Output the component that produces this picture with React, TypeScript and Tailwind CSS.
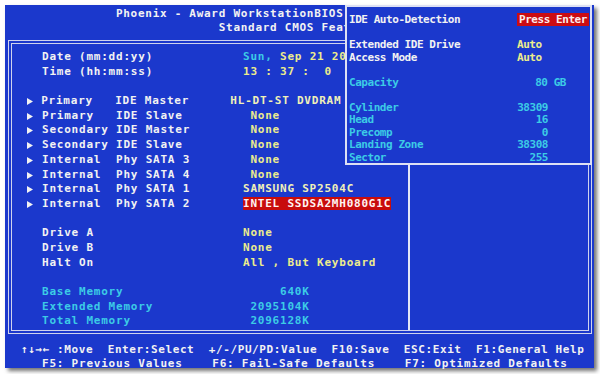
import type { ReactNode } from "react";

const Y = "text-[#ecec8c]";
const YL = "text-[#f0f0b8]";
const C = "text-[#3ccbe6]";

type Row = {
  arrow?: boolean;
  label: string;
  cyan?: boolean;
  value?: ReactNode;
} | null;

const rows: Row[] = [
  {
    label: "Date (mm:dd:yy)",
    value: (
      <>
        <span className={C}>Sun,</span>
        <span className={Y}> Sep 21 2008</span>
      </>
    ),
  },
  { label: "Time (hh:mm:ss)", value: <span className={Y}>13 : 37 :  0</span> },
  null,
  { arrow: true, label: "Primary   IDE Master", value: <span className={YL}>HL-DT-ST DVDRAM GSA-H62N</span> },
  { arrow: true, label: "Primary   IDE Slave", value: <span className={Y}> None</span> },
  { arrow: true, label: "Secondary IDE Master", value: <span className={Y}> None</span> },
  { arrow: true, label: "Secondary IDE Slave", value: <span className={Y}> None</span> },
  { arrow: true, label: "Internal  Phy SATA 3", value: <span className={Y}> None</span> },
  { arrow: true, label: "Internal  Phy SATA 4", value: <span className={Y}> None</span> },
  { arrow: true, label: "Internal  Phy SATA 1", value: <span className={YL}>SAMSUNG SP2504C</span> },
  {
    arrow: true,
    label: "Internal  Phy SATA 2",
    value: <span className="bg-[#c80c0c] text-[#fff2f2]">INTEL SSDSA2MH080G1C</span>,
  },
  null,
  { label: "Drive A", value: <span className={Y}>None</span> },
  { label: "Drive B", value: <span className={Y}>None</span> },
  { label: "Halt On", value: <span className={Y}>All , But Keyboard</span> },
  null,
  { label: "Base Memory", cyan: true, value: <span className={C}>     640K</span> },
  { label: "Extended Memory", cyan: true, value: <span className={C}> 2095104K</span> },
  { label: "Total Memory", cyan: true, value: <span className={C}> 2096128K</span> },
];

type PopRow = { label: string; cyan?: boolean; value?: ReactNode } | null;

const popRows: PopRow[] = [
  {
    label: "IDE Auto-Detection",
    value: <span className="bg-[#cc0c12] px-[2px] text-[#fbecec]">Press Enter</span>,
  },
  null,
  { label: "Extended IDE Drive", value: <span className={Y}>Auto</span> },
  { label: "Access Mode", value: <span className={Y}>Auto</span> },
  null,
  { label: "Capacity", cyan: true, value: <span className={`${C} inline-block w-[49px] text-right`}>80 GB</span> },
  null,
  { label: "Cylinder", cyan: true, value: <span className={`${C} inline-block w-[31px] text-right`}>38309</span> },
  { label: "Head", cyan: true, value: <span className={`${C} inline-block w-[31px] text-right`}>16</span> },
  { label: "Precomp", cyan: true, value: <span className={`${C} inline-block w-[31px] text-right`}>0</span> },
  { label: "Landing Zone", cyan: true, value: <span className={`${C} inline-block w-[31px] text-right`}>38308</span> },
  { label: "Sector", cyan: true, value: <span className={`${C} inline-block w-[31px] text-right`}>255</span> },
];

function Arrow() {
  return (
    <svg width="6" height="7" viewBox="0 0 6 7" className="mt-[4px]">
      <polygon points="0,0 6,3.5 0,7" fill="#f2f2f2" />
    </svg>
  );
}

export default function App() {
  return (
    <div className="h-[374px] w-[600px] overflow-hidden bg-white pl-[5px] pt-[5px] font-['DejaVu_Sans_Mono','Liberation_Mono',monospace] font-bold text-[11px] text-[#f2f2f2]">
      <div className="relative h-[363px] w-[589px] bg-[#1b38cc] shadow-[3px_3px_4px_rgba(0,0,0,0.55)]">
        {/* title */}
        <div className="whitespace-pre pt-[2px] text-center leading-[14px] tracking-[0.72px]">
          <div>Phoenix - Award WorkstationBIOS CMOS Setup Utility</div>
          <div>Standard CMOS Features</div>
        </div>

        {/* main box */}
        <div className="ml-[3px] mt-[5px] flex h-[294px] w-[584px] border-4 border-double border-[#cfd3ee]">
          <div className="w-[396px] pt-[6px] tracking-[0.78px]">
            {rows.map((r, i) =>
              r ? (
                <div key={i} className="flex h-[14.7px] whitespace-pre pl-[15px] leading-[14.7px]">
                  <div className="w-[15px]">{r.arrow && <Arrow />}</div>
                  <div className={`w-[201px] ${r.cyan ? C : ""}`}>{r.label}</div>
                  <div>{r.value}</div>
                </div>
              ) : (
                <div key={i} className="h-[14.7px]" />
              ),
            )}
          </div>
          <div className="flex-1 border-l-2 border-[#e4e7f6]" />
        </div>

        {/* footer */}
        <div className="whitespace-pre pt-[9px] leading-[14px]">
          <div className="pl-[16px] tracking-[0.6px]">
            ↑↓→← :Move  Enter:Select  +/-/PU/PD:Value  F10:Save  ESC:Exit  F1:General Help
          </div>
          <div className="pl-[37px] tracking-[0.78px]">
            F5: Previous Values    F6: Fail-Safe Defaults    F7: Optimized Defaults
          </div>
        </div>

        {/* IDE auto-detection popup */}
        <div className="absolute left-[340px] top-0 h-[160px] w-[247px] border-2 border-[#dde0f4] bg-[#1b38cc] pl-[2px] pt-[7px] tracking-[-0.45px]">
          {popRows.map((r, i) =>
            r ? (
              <div key={i} className="flex h-[12.5px] whitespace-pre leading-[12.5px]">
                <div className={`w-[168px] ${r.cyan ? C : ""}`}>{r.label}</div>
                <div>{r.value}</div>
              </div>
            ) : (
              <div key={i} className="h-[12.5px]" />
            ),
          )}
        </div>
      </div>
    </div>
  );
}
